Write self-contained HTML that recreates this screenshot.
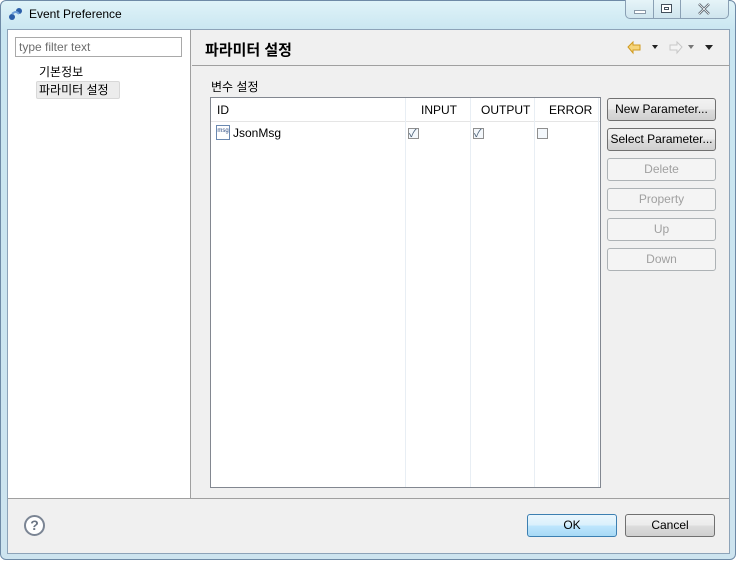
<!DOCTYPE html>
<html><head><meta charset="utf-8"><style>
*{box-sizing:border-box;margin:0;padding:0}
body{width:738px;height:561px;overflow:hidden;background:#fff;font-family:"Liberation Sans","Noto Sans CJK KR",sans-serif;font-size:12px;color:#000;position:relative}
.frame{position:absolute;left:0;top:0;width:736px;height:560px;border:1px solid #6e8aa6;border-radius:6px;background:linear-gradient(180deg,#dff3f8 0,#c9e6f1 30px,#cde4ef 100%)}
.abs{position:absolute}
.inner{position:absolute;left:7px;top:29px;width:723px;height:525px;border:1px solid #8da3b8;background:#f0f0f0}
.btn{position:absolute;border:1px solid #707070;border-radius:3px;background:linear-gradient(#f2f2f2,#ebebeb 50%,#dddddd 51%,#cfcfcf);text-align:center;font-size:12px;line-height:20px;color:#000}
.dis{border-color:#adb2b5;background:#f4f4f4;color:#a0a0a0}
.cb{position:absolute;width:11px;height:11px;border:1px solid #8f8f8f;background:#f4f8fc}
</style></head><body>
<div class="frame"></div>
<svg class="abs" style="left:8px;top:6px" width="16" height="16"><circle cx="4" cy="11" r="3" fill="#2a5ea8"/><circle cx="11" cy="5" r="3" fill="#2a5ea8"/><path d="M4 8 Q8 4 11 8" stroke="#6fa0d8" stroke-width="2" fill="none"/></svg>
<div class="abs" style="left:29px;top:7px;font-size:12px">Event Preference</div>
<div class="abs" style="left:625px;top:0;width:104px;height:19px;border:1px solid #8aa0b4;border-top:none;border-radius:0 0 5px 5px;background:linear-gradient(#e6f4f8,#cfe5ee)"></div>
<div class="abs" style="left:653px;top:0;width:1px;height:19px;background:#8aa0b4"></div>
<div class="abs" style="left:680px;top:0;width:1px;height:19px;background:#8aa0b4"></div>
<div class="abs" style="left:634px;top:10px;width:12px;height:4px;border:1px solid #8a99a8;background:#fff"></div>
<div class="abs" style="left:661px;top:4px;width:11px;height:9px;border:1px solid #44505c;background:#fff"><div style="margin:2px;width:5px;height:3px;border:1px solid #44505c"></div></div>
<svg class="abs" style="left:697px;top:3px" width="14" height="12"><path d="M2 1 L12 11 M12 1 L2 11" stroke="#5a6670" stroke-width="2.5"/><path d="M2 1 L12 11 M12 1 L2 11" stroke="#fff" stroke-width="0.8"/></svg>
<div class="inner">
 <div class="abs" style="left:0;top:0;width:183px;height:468px;background:#fff;border-right:1px solid #a0a0a0"></div>
 <div class="abs" style="left:7px;top:7px;width:167px;height:20px;border:1px solid #a9a9a9;background:#fff;color:#6d6d6d;padding-left:3px;line-height:18px">type filter text</div>
 <div class="abs" style="left:31px;top:33px">기본정보</div>
 <div class="abs" style="left:28px;top:51px;width:84px;height:18px;border:1px solid #d8d8d8;border-radius:2px;background:#ececec;padding-left:2px;line-height:16px">파라미터 설정</div>
 <div class="abs" style="left:184px;top:35px;width:538px;height:1px;background:#a0a0a0"></div>
 <div class="abs" style="left:197px;top:9px;font-size:15px;font-weight:bold">파라미터 설정</div>
 <svg class="abs" style="left:618px;top:10px" width="100" height="16"><path d="M2 7 L7 2 V5 H14 V10 H7 V13 Z" fill="#f6d57a" stroke="#d09a20"/><path d="M26 5 L32 5 L29 9Z" fill="#222"/><path d="M56 7 L51 2 V5 H44 V10 H51 V13 Z" fill="#f4f4f4" stroke="#c8c8c8"/><path d="M62 5 L68 5 L65 9Z" fill="#777"/><path d="M79 5 L87 5 L83 10Z" fill="#222"/></svg>
 <div class="abs" style="left:203px;top:48px">변수 설정</div>
 <div class="abs" style="left:202px;top:67px;width:391px;height:391px;border:1px solid #828790;background:#fff">
  <div class="abs" style="left:0;top:0;width:389px;height:24px;border-bottom:1px solid #e5e5e5"></div>
  <div class="abs" style="left:194px;top:0;width:1px;height:389px;background:#e8eef4"></div>
  <div class="abs" style="left:259px;top:0;width:1px;height:389px;background:#e8eef4"></div>
  <div class="abs" style="left:323px;top:0;width:1px;height:389px;background:#e8eef4"></div>
  <div class="abs" style="left:387px;top:0;width:1px;height:389px;background:#e8eef4"></div>
  <div class="abs" style="left:6px;top:5px">ID</div>
  <div class="abs" style="left:210px;top:5px">INPUT</div>
  <div class="abs" style="left:270px;top:5px">OUTPUT</div>
  <div class="abs" style="left:338px;top:5px">ERROR</div>
  <div class="abs" style="left:5px;top:27px;width:14px;height:15px;border:1px solid #6a88b0;font-size:6px;color:#2a4a80;line-height:11px;text-align:center">msg</div>
  <div class="abs" style="left:22px;top:28px">JsonMsg</div>
  <div class="cb" style="left:197px;top:30px"></div><div class="abs" style="left:198px;top:27px;font-size:11px;color:#4a6078">✓</div>
  <div class="cb" style="left:262px;top:30px"></div><div class="abs" style="left:263px;top:27px;font-size:11px;color:#4a6078">✓</div>
  <div class="cb" style="left:326px;top:30px"></div>
 </div>
 <div class="btn" style="left:599px;top:68px;width:109px;height:23px">New Parameter...</div>
 <div class="btn" style="left:599px;top:98px;width:109px;height:23px">Select Parameter...</div>
 <div class="btn dis" style="left:599px;top:128px;width:109px;height:23px">Delete</div>
 <div class="btn dis" style="left:599px;top:158px;width:109px;height:23px">Property</div>
 <div class="btn dis" style="left:599px;top:188px;width:109px;height:23px">Up</div>
 <div class="btn dis" style="left:599px;top:218px;width:109px;height:23px">Down</div>
 <div class="abs" style="left:0;top:468px;width:721px;height:1px;background:#a0a0a0"></div>
 <div class="abs" style="left:16px;top:485px;width:21px;height:21px;border:2px solid #7b8594;border-radius:50%;background:#fff;text-align:center;font-weight:bold;font-size:14px;line-height:17px;color:#6b7584">?</div>
 <div class="btn" style="left:519px;top:484px;width:90px;height:23px;border-color:#3c7fb1;background:linear-gradient(#eaf6fd,#d9f0fc 50%,#bee6fd 51%,#a7d9f5)">OK</div>
 <div class="btn" style="left:617px;top:484px;width:90px;height:23px">Cancel</div>
</div>
</body></html>
